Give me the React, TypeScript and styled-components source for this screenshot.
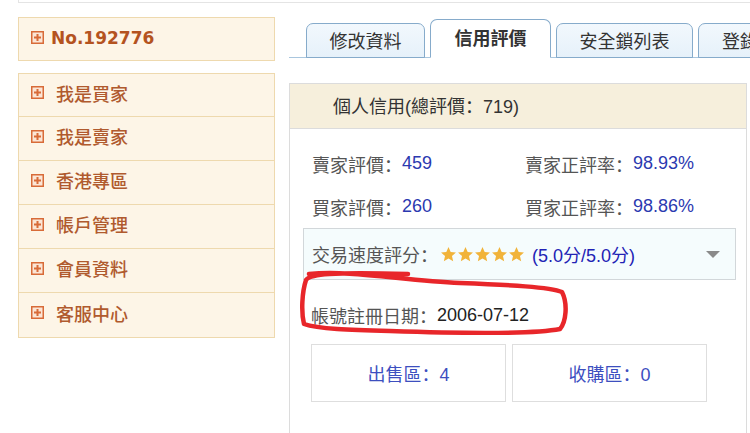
import styled, { createGlobalStyle } from "styled-components";

const GlobalStyle = createGlobalStyle`
  html, body {
    margin: 0;
    padding: 0;
    background: #fff;
    overflow: hidden;
  }
  body {
    font-family: "Liberation Sans", "Noto Sans CJK SC", sans-serif;
  }
`;

const Page = styled.div`
  width: 732px;
  height: 433px;
  padding-left: 18px;
  overflow: hidden;
`;
const TopStrip = styled.div`
  height: 2px;
  border-left: 1px solid #e4e4e4;
  border-bottom: 1px solid #e4e4e4;
`;
const Main = styled.div`
  display: flex;
  gap: 14px;
  margin-top: 14px;
`;

const Sidebar = styled.div`
  width: 257px;
  flex-shrink: 0;
`;
const IdBox = styled.div`
  box-sizing: border-box;
  height: 44px;
  display: flex;
  align-items: center;
  gap: 7px;
  padding: 0 0 3px 12px;
  background: #fdf5e7;
  border: 1px solid #eed9ae;
  color: #b4531f;
  font: bold 17px "DejaVu Sans", sans-serif;
`;
const Menu = styled.div`
  margin-top: 12px;
  border: 1px solid #eed9ae;
  background: #fdf5e7;
`;
const MenuItem = styled.div`
  box-sizing: border-box;
  height: 44px;
  display: flex;
  align-items: center;
  gap: 12px;
  padding: 0 0 5px 12px;
  border-bottom: 1px solid #eed9ae;
  color: #b05a2e;
  font: 500 18px/1 "Noto Sans CJK TC", sans-serif;
  &:first-child {
    height: 43px;
  }
  &:last-child {
    border-bottom: none;
  }
`;

const Content = styled.div`
  width: 458px;
  flex-shrink: 0;
`;
const TabBar = styled.div`
  height: 40px;
  display: flex;
  align-items: flex-end;
  gap: 5px;
  padding-left: 17px;
  border-bottom: 1px solid #a9c6de;
  white-space: nowrap;
`;
const Tab = styled.div<{ $active?: boolean; $w: number }>`
  box-sizing: border-box;
  flex-shrink: 0;
  width: ${(p) => p.$w}px;
  height: ${(p) => (p.$active ? 39 : 35)}px;
  margin-bottom: -1px;
  display: flex;
  align-items: center;
  justify-content: center;
  padding-bottom: ${(p) => (p.$active ? 4 : 2)}px;
  border: 1px solid #86abcb;
  border-bottom: ${(p) => (p.$active ? "1px solid #fff" : "1px solid #86abcb")};
  border-radius: 7px 7px 0 0;
  background: ${(p) => (p.$active ? "#fff" : "linear-gradient(#f2f8fd, #e6f1fa)")};
  color: #333;
  font: ${(p) => (p.$active ? 700 : 400)} 18px/1 "Noto Sans CJK TC", sans-serif;
`;

const Panel = styled.div`
  position: relative;
  margin-top: 25px;
  height: 360px;
  border: 1px solid #dcdcdc;
  border-bottom: none;
`;
const PanelHeader = styled.div`
  box-sizing: border-box;
  height: 45px;
  display: flex;
  align-items: center;
  padding: 0 0 3px 43px;
  background: #f6efdc;
  border-bottom: 1px solid #dcdcdc;
  color: #333;
  font-size: 18px;
`;
const PanelBody = styled.div`
  padding: 13px 10px 0 13px;
`;
const StatGrid = styled.div`
  display: grid;
  grid-template-columns: 213px 1fr;
  padding-left: 9px;
`;
const Stat = styled.div`
  height: 43px;
  display: flex;
  align-items: center;
  color: #555;
  font-size: 18px;
`;
const Num = styled.span<{ $dark?: boolean }>`
  color: ${(p) => (p.$dark ? "#222" : "#2b39b0")};
`;
const Select = styled.div`
  box-sizing: border-box;
  height: 52px;
  display: flex;
  align-items: center;
  padding: 0 15px 0 8px;
  background: #f5fcfd;
  border: 1px solid #d2d7da;
  color: #555;
  font-size: 18px;
`;
const Stars = styled.span`
  display: inline-flex;
  gap: 0;
  margin: 0 7px 0 2px;
`;
const Score = styled.span`
  color: #2222b5;
  flex: 1;
`;
const Caret = styled.span`
  width: 0;
  height: 0;
  border-left: 7px solid transparent;
  border-right: 7px solid transparent;
  border-top: 7px solid #8a8a8a;
`;
const DateLine = styled.div`
  margin-top: 15px;
  height: 40px;
  display: flex;
  align-items: center;
  padding-left: 8px;
  color: #555;
  font-size: 18px;
`;
const Boxes = styled.div`
  display: flex;
  gap: 6px;
  margin-top: 9px;
  padding-left: 8px;
`;
const ZoneBox = styled.div`
  box-sizing: border-box;
  width: 195px;
  height: 58px;
  display: flex;
  align-items: center;
  justify-content: center;
  border: 1px solid #dedede;
  color: #3d4fbf;
  font-size: 18px;
`;
const Mark = styled.svg`
  position: absolute;
  left: 0;
  top: 0;
  pointer-events: none;
`;

const PlusIcon = () => (
  <svg width="13" height="13" viewBox="0 0 13 13">
    <rect x="0.75" y="0.75" width="11.5" height="11.5" fill="#fbe6d6" stroke="#d86b38" strokeWidth="1.5" />
    <path d="M6.5 3v7M3 6.5h7" stroke="#d86b38" strokeWidth="2" />
  </svg>
);

const Star = () => (
  <svg width="17" height="17" viewBox="0 0 24 24">
    <path d="M12 1.5l3.1 7 7.4.7-5.6 5 1.7 7.4L12 17.8l-6.6 3.8 1.7-7.4-5.6-5 7.4-.7z" fill="#f1b33a" />
  </svg>
);

const menu = ["我是買家", "我是賣家", "香港專區", "帳戶管理", "會員資料", "客服中心"];

export default function App() {
  return (
    <>
      <GlobalStyle />
      <Page>
        <TopStrip />
        <Main>
          <Sidebar>
            <IdBox>
              <PlusIcon />
              No.192776
            </IdBox>
            <Menu>
              {menu.map((m) => (
                <MenuItem key={m}>
                  <PlusIcon />
                  {m}
                </MenuItem>
              ))}
            </Menu>
          </Sidebar>
          <Content>
            <TabBar>
              <Tab $w={119}>修改資料</Tab>
              <Tab $w={121} $active>信用評價</Tab>
              <Tab $w={137}>安全鎖列表</Tab>
              <Tab $w={120}>登錄記錄</Tab>
            </TabBar>
            <Panel>
              <PanelHeader>個人信用(總評價：719)</PanelHeader>
              <PanelBody>
                <StatGrid>
                  <Stat>賣家評價：<Num>459</Num></Stat>
                  <Stat>賣家正評率：<Num>98.93%</Num></Stat>
                  <Stat>買家評價：<Num>260</Num></Stat>
                  <Stat>買家正評率：<Num>98.86%</Num></Stat>
                </StatGrid>
                <Select>
                  交易速度評分：
                  <Stars>
                    {[0, 1, 2, 3, 4].map((i) => (
                      <Star key={i} />
                    ))}
                  </Stars>
                  <Score>(5.0分/5.0分)</Score>
                  <Caret />
                </Select>
                <DateLine>帳號註冊日期：<Num $dark>2006-07-12</Num></DateLine>
                <Boxes>
                  <ZoneBox>出售區：4</ZoneBox>
                  <ZoneBox>收購區：0</ZoneBox>
                </Boxes>
              </PanelBody>
              <Mark width="300" height="360" viewBox="0 0 300 360">
                <path
                  d="M19 190 C 60 186, 110 196, 170 199 C 220 201, 260 203, 272 208 C 278 220, 276 238, 270 245 C 240 251, 160 249, 100 247 C 60 246, 28 245, 14 240 C 11 228, 12 208, 16 196 C 20 190, 40 188, 118 190"
                  fill="none"
                  stroke="#e8262a"
                  strokeWidth="4.5"
                  strokeLinecap="round"
                  strokeLinejoin="round"
                />
              </Mark>
            </Panel>
          </Content>
        </Main>
      </Page>
    </>
  );
}
